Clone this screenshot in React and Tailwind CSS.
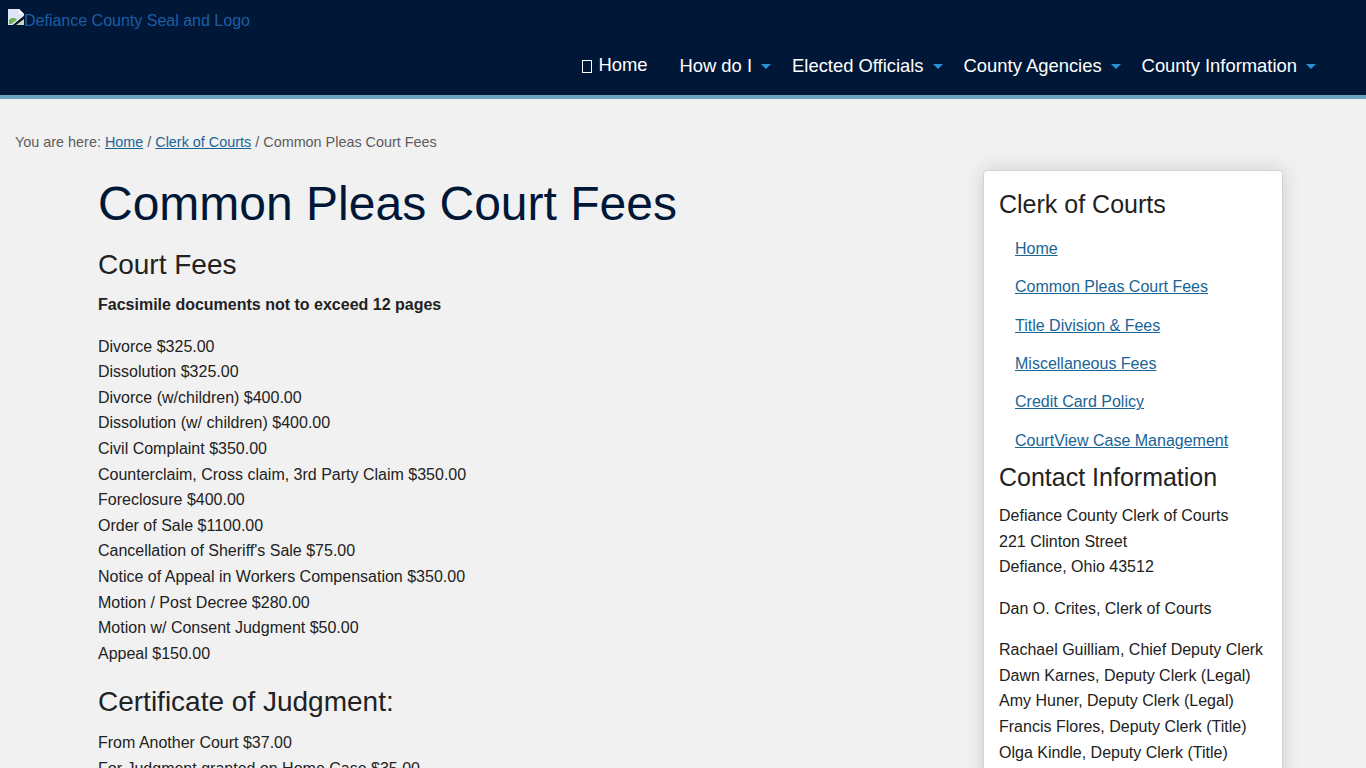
import React from 'react';

const navItems = ['How do I', 'Elected Officials', 'County Agencies', 'County Information'];

const fees = [
  'Divorce $325.00',
  'Dissolution $325.00',
  'Divorce (w/children) $400.00',
  'Dissolution (w/ children) $400.00',
  'Civil Complaint $350.00',
  'Counterclaim, Cross claim, 3rd Party Claim $350.00',
  'Foreclosure $400.00',
  'Order of Sale $1100.00',
  "Cancellation of Sheriff's Sale $75.00",
  'Notice of Appeal in Workers Compensation $350.00',
  'Motion / Post Decree $280.00',
  'Motion w/ Consent Judgment $50.00',
  'Appeal $150.00',
];

const sideLinks = [
  'Home',
  'Common Pleas Court Fees',
  'Title Division & Fees',
  'Miscellaneous Fees',
  'Credit Card Policy',
  'CourtView Case Management',
];

const staff = [
  'Rachael Guilliam, Chief Deputy Clerk',
  'Dawn Karnes, Deputy Clerk (Legal)',
  'Amy Huner, Deputy Clerk (Legal)',
  'Francis Flores, Deputy Clerk (Title)',
  'Olga Kindle, Deputy Clerk (Title)',
];

const BrokenImage = () => (
  <svg className="w-4 h-4 shrink-0" viewBox="0 0 16 16">
    {/* page with a torn lower right corner */}
    <path d="M0 0H11L16 5V7L5 16H0Z" fill="#dfe6f5" />
    <path d="M11 0V5H16Z" fill="#ffffff" />
    <path d="M1 15V11C3.5 8.5 6.5 8.5 9 10.5L3.5 15Z" fill="#6fae4d" />
    <path d="M7 16L16 9V16Z" fill="#c8d8c0" />
    <path d="M5 16L16 7V10L8 16Z" fill="#0a1420" />
  </svg>
);

const Caret = () => (
  <span className="ml-[9px] mt-[1px] w-0 h-0 border-x-[5px] border-x-transparent border-t-[5px] border-t-[#2b8fd6]" />
);

export default function App() {
  return (
    <div className="h-[768px] overflow-hidden bg-[#f1f1f1] text-[16px] leading-[25.6px] text-[#222222] font-['Liberation_Sans',Arial,sans-serif]">
      <header className="h-[99px] bg-[#001737] border-b-4 border-[#6ba3bf] px-2 pt-2">
        <div className="flex items-start text-[#1d5ea3] h-[24px]">
          <span className="mt-[1px]"><BrokenImage /></span>
          <span>Defiance County Seal and Logo</span>
        </div>
        <nav className="flex justify-end items-center mt-[22px] pr-[42px] text-white text-[18.4px] leading-[24px]">
          <a className="flex items-center mr-[32px] -mt-[2px]">
            <span className="w-[10px] h-[13px] border border-white mr-[6px] mt-[2px]" />
            Home
          </a>
          {navItems.map((item, i) => (
            <a key={item} className={i < navItems.length - 1 ? 'flex items-center mr-[21px]' : 'flex items-center'}>
              {item}
              <Caret />
            </a>
          ))}
        </nav>
      </header>

      <p className="pl-[15px] pt-[30px] text-[14.4px] leading-[26px] text-[#5c5c5c]">
        You are here: <a className="underline text-[#1a6496]">Home</a> / <a className="underline text-[#1a6496]">Clerk of Courts</a> / Common Pleas Court Fees
      </p>

      <div className="flex pl-[98px] pt-[15px]">
        <main className="w-[885px] shrink-0">
          <h1 className="text-[48px] leading-[58px] text-[#001737] mt-[5px]">Common Pleas Court Fees</h1>
          <h2 className="text-[28px] leading-[34px] mt-[15px]">Court Fees</h2>
          <p className="font-bold mt-[10px]">Facsimile documents not to exceed 12 pages</p>
          <ul className="mt-[16px]">
            {fees.map((fee) => (
              <li key={fee}>{fee}</li>
            ))}
          </ul>
          <h2 className="text-[28px] leading-[34px] mt-[19px]">Certificate of Judgment:</h2>
          <p className="mt-[11px]">From Another Court $37.00</p>
          <p>For Judgment granted on Home Case $35.00</p>
        </main>

        <aside className="w-[300px] shrink-0 self-start bg-white border border-[#d4d4d4] rounded-[4px] shadow-[0_0_20px_rgba(0,0,0,0.15)] px-[15px] pt-[15px] pb-6">
          <h3 className="text-[25px] leading-[36px]">Clerk of Courts</h3>
          <ul className="mt-[14px] pl-4">
            {sideLinks.map((link) => (
              <li key={link} className="mb-[12.75px]">
                <a className="underline text-[#1a6496]">{link}</a>
              </li>
            ))}
          </ul>
          <h3 className="text-[25px] leading-[36px] -mt-[7px]">Contact Information</h3>
          <p className="mt-[8px]">
            Defiance County Clerk of Courts<br />
            221 Clinton Street<br />
            Defiance, Ohio 43512
          </p>
          <p className="mt-[16px]">Dan O. Crites, Clerk of Courts</p>
          <div className="mt-[15.7px]">
            {staff.map((name) => (
              <p key={name} className="whitespace-nowrap">{name}</p>
            ))}
          </div>
        </aside>
      </div>
    </div>
  );
}
